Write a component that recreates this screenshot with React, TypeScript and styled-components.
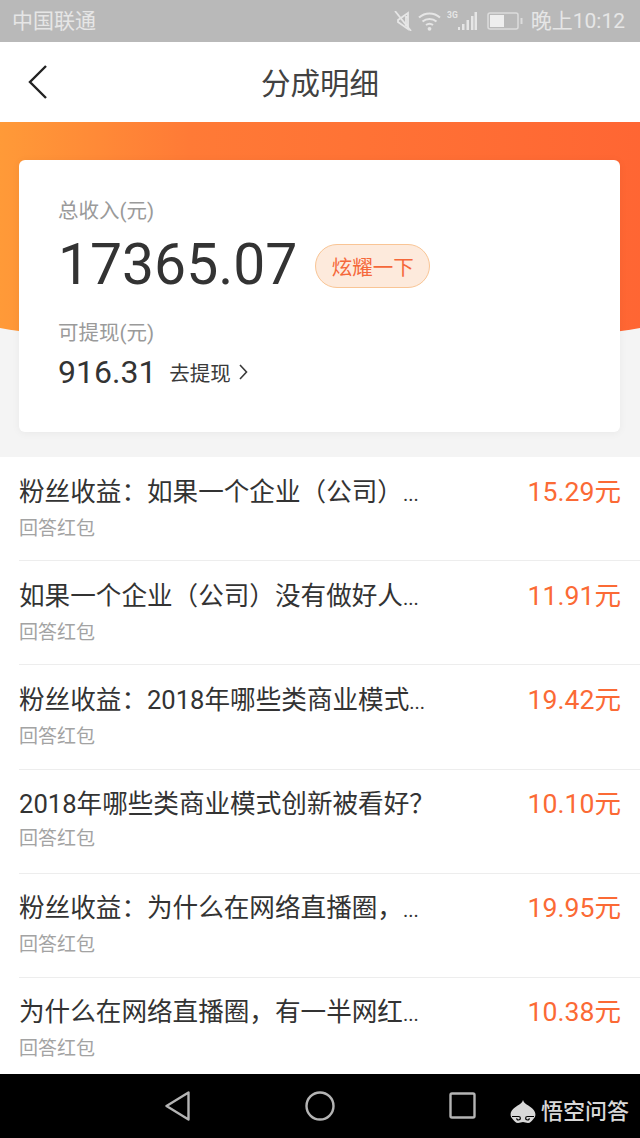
import styled, { createGlobalStyle } from "styled-components";

const GlobalStyle = createGlobalStyle`
  html, body {
    margin: 0;
    padding: 0;
    background: #ffffff;
  }
  body {
    font-family: Roboto, "Noto Sans CJK SC", sans-serif;
  }
  * {
    box-sizing: border-box;
  }
`;

const Page = styled.div`
  width: 640px;
  height: 1138px;
  display: flex;
  flex-direction: column;
  overflow: hidden;
  background: #ffffff;
`;

const StatusBar = styled.div`
  height: 42px;
  flex: none;
  display: flex;
  align-items: center;
  justify-content: space-between;
  padding: 0 15px 0 12px;
  background: #b9b9b9;
  color: #e6e6e6;
`;

const Carrier = styled.span`
  font-size: 21px;
  line-height: 42px;
`;

const StatusRight = styled.div`
  display: flex;
  align-items: center;
  gap: 6px;
`;

const Clock = styled.span`
  font-size: 21px;
  line-height: 42px;
  margin-left: 2px;
`;

const Header = styled.header`
  height: 80px;
  flex: none;
  position: relative;
  display: flex;
  align-items: center;
  justify-content: center;
  padding-bottom: 3px;
  background: #ffffff;
`;

const BackButton = styled.div`
  position: absolute;
  left: 27px;
  top: 23px;
  display: flex;
`;

const Title = styled.h1`
  margin: 0;
  font-size: 29.5px;
  font-weight: 400;
  color: #424242;
`;

const Hero = styled.section`
  height: 335px;
  flex: none;
  position: relative;
  padding: 38px 20px 25px 19px;
  background: #f4f4f4;

  &::before {
    content: "";
    position: absolute;
    left: -40px;
    right: -40px;
    top: 0;
    height: 224px;
    border-radius: 0 0 50% 50% / 0 0 33px 33px;
    background: linear-gradient(90deg, #ff9a38 5.5%, #ff7a36 32%, #ff6433 100%);
  }
`;

const Card = styled.div`
  position: relative;
  height: 272px;
  padding: 36px 39px 0;
  border-radius: 6px;
  background: #ffffff;
  box-shadow: 0 1px 8px rgba(0, 0, 0, 0.05);
`;

const CardLabel = styled.div`
  font-size: 20.5px;
  line-height: 30px;
  color: #9a9a9a;
`;

const TotalRow = styled.div`
  display: flex;
  align-items: center;
  gap: 18px;
  height: 72px;
  margin-top: 3px;
  margin-bottom: 17px;
`;

const Total = styled.span`
  font-size: 57px;
  line-height: 72px;
  color: #333333;
`;

const ShowOff = styled.span`
  width: 115px;
  height: 44px;
  margin-top: 2px;
  display: flex;
  align-items: center;
  justify-content: center;
  border: 1px solid #f9c595;
  border-radius: 22px;
  background: #fdeadc;
  color: #f5683a;
  font-size: 20.5px;
`;

const WithdrawRow = styled.div`
  display: flex;
  align-items: center;
  height: 46px;
  margin-top: 1px;
`;

const Balance = styled.span`
  font-size: 32px;
  color: #333333;
`;

const WithdrawLink = styled.span`
  display: flex;
  align-items: center;
  gap: 8px;
  margin-left: 13px;
  font-size: 20.5px;
  color: #3a3a3a;
`;

const List = styled.ul`
  flex: 1;
  margin: 0;
  padding: 0 0 0 19px;
  list-style: none;
  overflow: hidden;
`;

const Row = styled.li`
  height: 104.2px;
  display: flex;
  justify-content: space-between;
  padding: 15.5px 19px 0 0;
  border-bottom: 1px solid #ededed;

  &:last-child {
    border-bottom: none;
  }
`;

const RowText = styled.div`
  display: flex;
  flex-direction: column;
`;

const RowTitle = styled.div`
  font-size: 25.6px;
  line-height: 38px;
  color: #333333;
  white-space: nowrap;
`;

const Dots = styled.span`
  font-size: 20px;
`;

const RowSub = styled.div`
  font-size: 19px;
  line-height: 30px;
  margin-top: 1px;
  color: #a3a3a3;
`;

const Amount = styled.div`
  font-size: 26.6px;
  line-height: 38px;
  color: #fb6a35;
`;

const NavBar = styled.nav`
  height: 64px;
  flex: none;
  position: relative;
  display: flex;
  align-items: center;
  justify-content: center;
  gap: 114.5px;
  padding: 0 0 1px 1px;
  background: #000000;
`;

const Brand = styled.div`
  position: absolute;
  right: 11px;
  bottom: 12px;
  display: flex;
  align-items: center;
  gap: 5px;
  color: #d8d8d8;
  font-size: 22px;
  line-height: 28px;
  font-weight: 500;
`;

const rows = [
  { title: "粉丝收益：如果一个企业（公司）", cut: true, amount: "15.29元" },
  { title: "如果一个企业（公司）没有做好人", cut: true, amount: "11.91元" },
  { title: "粉丝收益：2018年哪些类商业模式", cut: true, amount: "19.42元" },
  { title: "2018年哪些类商业模式创新被看好？", cut: false, amount: "10.10元" },
  { title: "粉丝收益：为什么在网络直播圈，", cut: true, amount: "19.95元" },
  { title: "为什么在网络直播圈，有一半网红", cut: true, amount: "10.38元" },
];

const MuteIcon = () => (
  <svg width="18" height="20" viewBox="0 0 18 20" fill="none" stroke="#e6e6e6" strokeWidth="1.800">
    <path d="M14 2L4 9v2l10 7z" />
    <path d="M14 6h-2v8h2" />
    <path d="M1 0l16 20" />
  </svg>
);

const WifiIcon = () => (
  <svg width="23" height="19" viewBox="0 0 23 19" fill="none" stroke="#e6e6e6" strokeWidth="2">
    <path d="M1 5.500c6-5.500 15-5.500 21 0" />
    <path d="M4.500 9.500c4-3.500 10-3.500 14 0" />
    <path d="M8 13c2-1.500 5-1.500 7 0" />
    <circle cx="11.500" cy="16.800" r="1.900" fill="#e6e6e6" stroke="none" />
  </svg>
);

const SignalIcon = () => (
  <svg width="34" height="20" viewBox="0 0 34 20" fill="#e6e6e6">
    <text x="0" y="7" fontSize="8.500" fontWeight="700" fontFamily="Roboto, sans-serif">3G</text>
    <rect x="11" y="16" width="2" height="3" />
    <rect x="15" y="13" width="2.500" height="6" />
    <rect x="19.500" y="9" width="2.500" height="10" />
    <rect x="24" y="5" width="2.500" height="14" />
    <rect x="27.500" y="1" width="2.500" height="18" />
  </svg>
);

const BatteryIcon = () => (
  <svg width="36" height="18" viewBox="0 0 36 18" fill="none">
    <rect x="1" y="1" width="30" height="16" rx="2" stroke="#dcdcdc" strokeWidth="1.500" />
    <rect x="3" y="3" width="14" height="12" fill="#eeeeee" />
    <rect x="33.500" y="6" width="2" height="6" fill="#dcdcdc" />
  </svg>
);

const BackIcon = () => (
  <svg width="22" height="34" viewBox="0 0 22 34" fill="none" stroke="#222222" strokeWidth="2.400">
    <path d="M19 1L3 17l16 16" />
  </svg>
);

const ChevronIcon = () => (
  <svg width="9" height="16" viewBox="0 0 9 16" fill="none" stroke="#3a3a3a" strokeWidth="1.600">
    <path d="M1 1l6.500 7L1 15" />
  </svg>
);

const NavBack = () => (
  <svg width="25" height="30" viewBox="0 0 25 30" fill="none" stroke="#b4b4b4" strokeWidth="2.400" strokeLinejoin="round">
    <path d="M23.500 1.500v27L1.500 15z" />
  </svg>
);

const NavHome = () => (
  <svg width="30" height="30" viewBox="0 0 30 30" fill="none" stroke="#b4b4b4" strokeWidth="2.400">
    <circle cx="15" cy="15" r="13.500" />
  </svg>
);

const NavRecent = () => (
  <svg width="27" height="27" viewBox="0 0 27 27" fill="none" stroke="#b4b4b4" strokeWidth="2.400">
    <rect x="1.500" y="1.500" width="24" height="24" rx="1.500" />
  </svg>
);

const BrandIcon = () => (
  <svg width="26" height="24" viewBox="0 0 26 24" fill="none">
    <path
      d="M13 0c.6 2.500 2 3.500 4 4.700 3.500 2.200 8 5 8.400 9.300.2 2.500-1 4-2.400 5.500-1.400 1.600-2.500 3.500-5 3.500-2 0-3.500-1-5-1s-3 1-5 1c-2.500 0-3.600-1.900-5-3.500C1.600 18 .400 16.500.600 14 1 9.700 5.500 6.900 9 4.700 11 3.500 12.400 2.500 13 0z"
      fill="#d8d8d8"
    />
    <path
      d="M2 16.500h6.500c2.500 0 2.500 3.500 0 3.500-1.500 0-2-1-1.500-1.800M24 16.500h-6.500c-2.500 0-2.500 3.500 0 3.500 1.500 0 2-1 1.500-1.800"
      stroke="#000000"
      strokeWidth="1.200"
    />
  </svg>
);

const App = () => {
  return (
    <Page>
      <GlobalStyle />
      <StatusBar>
        <Carrier>中国联通</Carrier>
        <StatusRight>
          <MuteIcon />
          <WifiIcon />
          <SignalIcon />
          <BatteryIcon />
          <Clock>晚上10:12</Clock>
        </StatusRight>
      </StatusBar>
      <Header>
        <BackButton>
          <BackIcon />
        </BackButton>
        <Title>分成明细</Title>
      </Header>
      <Hero>
        <Card>
          <CardLabel>总收入(元)</CardLabel>
          <TotalRow>
            <Total>17365.07</Total>
            <ShowOff>炫耀一下</ShowOff>
          </TotalRow>
          <CardLabel>可提现(元)</CardLabel>
          <WithdrawRow>
            <Balance>916.31</Balance>
            <WithdrawLink>
              去提现
              <ChevronIcon />
            </WithdrawLink>
          </WithdrawRow>
        </Card>
      </Hero>
      <List>
        {rows.map((row) => (
          <Row key={row.title}>
            <RowText>
              <RowTitle>
                {row.title}
                {row.cut && <Dots>...</Dots>}
              </RowTitle>
              <RowSub>回答红包</RowSub>
            </RowText>
            <Amount>{row.amount}</Amount>
          </Row>
        ))}
      </List>
      <NavBar>
        <NavBack />
        <NavHome />
        <NavRecent />
        <Brand>
          <BrandIcon />
          悟空问答
        </Brand>
      </NavBar>
    </Page>
  );
};

export default App;
